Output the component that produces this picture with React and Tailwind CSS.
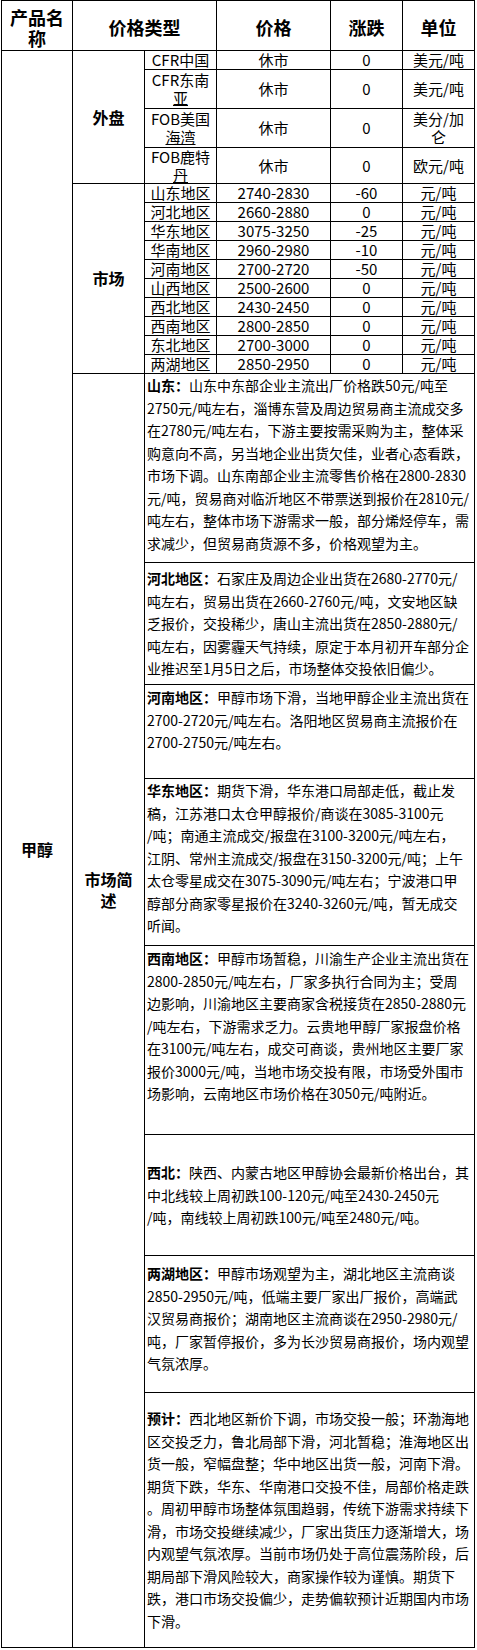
const overseas = [
	{ name: 'CFR中国', price: '休市', change: '0', unit: '美元/吨' },
	{ name: 'CFR东南', tail: '亚', price: '休市', change: '0', unit: '美元/吨' },
	{ name: 'FOB美国', tail: '海湾', price: '休市', change: '0', unit: '美分/加', unitTail: '仑' },
	{ name: 'FOB鹿特', tail: '丹', price: '休市', change: '0', unit: '欧元/吨' },
];

const markets = [
	['山东地区', '2740-2830', '-60'],
	['河北地区', '2660-2880', '0'],
	['华东地区', '3075-3250', '-25'],
	['华南地区', '2960-2980', '-10'],
	['河南地区', '2700-2720', '-50'],
	['山西地区', '2500-2600', '0'],
	['西北地区', '2430-2450', '0'],
	['西南地区', '2800-2850', '0'],
	['东北地区', '2700-3000', '0'],
	['两湖地区', '2850-2950', '0'],
];

// each note: label, padding-top, lines as the reference wraps them
const notes = [
	{
		label: '山东：',
		pad: 'pt-0',
		lines: [
			'山东中东部企业主流出厂价格跌50元/吨至',
			'2750元/吨左右，淄博东营及周边贸易商主流成交多',
			'在2780元/吨左右，下游主要按需采购为主，整体采',
			'购意向不高，另当地企业出货欠佳，业者心态看跌，',
			'市场下调。山东南部企业主流零售价格在2800-2830',
			'元/吨，贸易商对临沂地区不带票送到报价在2810元/',
			'吨左右，整体市场下游需求一般，部分烯烃停车，需',
			'求减少，但贸易商货源不多，价格观望为主。',
		],
	},
	{
		label: '河北地区：',
		pad: 'pt-[4px]',
		lines: [
			'石家庄及周边企业出货在2680-2770元/',
			'吨左右，贸易出货在2660-2760元/吨，文安地区缺',
			'乏报价，交投稀少，唐山主流出货在2850-2880元/',
			'吨左右，因雾霾天气持续，原定于本月初开车部分企',
			'业推迟至1月5日之后，市场整体交投依旧偏少。',
		],
	},
	{
		label: '河南地区：',
		pad: 'pt-px',
		lines: [
			'甲醇市场下滑，当地甲醇企业主流出货在',
			'2700-2720元/吨左右。洛阳地区贸易商主流报价在',
			'2700-2750元/吨左右。',
		],
	},
	{
		label: '华东地区：',
		pad: 'pt-0',
		lines: [
			'期货下滑，华东港口局部走低，截止发',
			'稿，江苏港口太仓甲醇报价/商谈在3085-3100元',
			'/吨；南通主流成交/报盘在3100-3200元/吨左右，',
			'江阴、常州主流成交/报盘在3150-3200元/吨；上午',
			'太仓零星成交在3075-3090元/吨左右；宁波港口甲',
			'醇部分商家零星报价在3240-3260元/吨，暂无成交',
			'听闻。',
		],
	},
	{
		label: '西南地区：',
		pad: 'pt-px',
		lines: [
			'甲醇市场暂稳，川渝生产企业主流出货在',
			'2800-2850元/吨左右，厂家多执行合同为主；受周',
			'边影响，川渝地区主要商家含税接货在2850-2880元',
			'/吨左右，下游需求乏力。云贵地甲醇厂家报盘价格',
			'在3100元/吨左右，成交可商谈，贵州地区主要厂家',
			'报价3000元/吨，当地市场交投有限，市场受外围市',
			'场影响，云南地区市场价格在3050元/吨附近。',
		],
	},
	{
		label: '西北：',
		pad: 'pt-[26px]',
		lines: [
			'陕西、内蒙古地区甲醇协会最新价格出台，其',
			'中北线较上周初跌100-120元/吨至2430-2450元',
			'/吨，南线较上周初跌100元/吨至2480元/吨。',
		],
	},
	{
		label: '两湖地区：',
		pad: 'pt-[6px]',
		lines: [
			'甲醇市场观望为主，湖北地区主流商谈',
			'2850-2950元/吨，低端主要厂家出厂报价，高端武',
			'汉贸易商报价；湖南地区主流商谈在2950-2980元/',
			'吨，厂家暂停报价，多为长沙贸易商报价，场内观望',
			'气氛浓厚。',
		],
	},
	{
		label: '预计：',
		pad: 'pt-[14px]',
		lines: [
			'西北地区新价下调，市场交投一般；环渤海地',
			'区交投乏力，鲁北局部下滑，河北暂稳；淮海地区出',
			'货一般，窄幅盘整；华中地区出货一般，河南下滑。',
			'期货下跌，华东、华南港口交投不佳，局部价格走跌',
			'。周初甲醇市场整体氛围趋弱，传统下游需求持续下',
			'滑，市场交投继续减少，厂家出货压力逐渐增大，场',
			'内观望气氛浓厚。当前市场仍处于高位震荡阶段，后',
			'期局部下滑风险较大，商家操作较为谨慎。期货下',
			'跌，港口市场交投偏少，走势偏软预计近期国内市场',
			'下滑。',
		],
	},
];

const head = 'flex items-center justify-center bg-white pt-[4px] text-center text-[18px] font-bold leading-[21px]';
const data = 'flex items-center justify-center bg-white text-center text-[15px] leading-[18px] whitespace-nowrap';
const label = 'flex items-center justify-center bg-white text-[16px] font-bold leading-[21px]';

export default function App() {
	return (
		<div className="bg-white pb-[2px] font-['Noto_Sans_CJK_SC',sans-serif] text-black">
			<div className="ml-px grid w-fit grid-cols-[70px_71px_71px_113px_71px_71px] grid-rows-[49px_18px_38px_38px_35px_repeat(10,18px)_188px_121px_93px_166px_188px_120px_136px_254px] gap-px bg-black p-px">
				<div className={head}>
					<div>
						<div>产品名</div>
						<div>称</div>
					</div>
				</div>
				<div className={`${head} col-span-2`}>价格类型</div>
				<div className={head}>价格</div>
				<div className={head}>涨跌</div>
				<div className={head}>单位</div>

				<div className={`${label} row-span-22`}>甲醇</div>

				<div className={`${label} row-span-4`}>外盘</div>
				{overseas.map((row) => (
					<OverseasRow key={row.name} row={row} />
				))}

				<div className={`${label} row-span-10`}>市场</div>
				{markets.map(([region, price, change]) => (
					<MarketRow key={region} region={region} price={price} change={change} />
				))}

				<div className="row-span-8 flex justify-center bg-white pt-[495px] text-center text-[16px] font-bold leading-[21px]">
					<div>
						<div>市场简</div>
						<div>述</div>
					</div>
				</div>
				{notes.map((note) => (
					<div
						key={note.label}
						className={`col-span-4 bg-white pl-[2px] text-[14px] leading-[22.5px] ${note.pad}`}
					>
						{note.lines.map((line, i) => (
							<div key={i} className="whitespace-nowrap">
								{i === 0 && <b className="font-bold">{note.label}</b>}
								{line}
							</div>
						))}
					</div>
				))}
			</div>
		</div>
	);
}

function OverseasRow({ row }) {
	return (
		<>
			<div className={`${data} flex-col`}>
				<span>{row.name}</span>
				{row.tail && <span className="underline">{row.tail}</span>}
			</div>
			<div className={data}>{row.price}</div>
			<div className={data}>{row.change}</div>
			<div className={`${data} flex-col`}>
				<span>{row.unit}</span>
				{row.unitTail && <span>{row.unitTail}</span>}
			</div>
		</>
	);
}

function MarketRow({ region, price, change }) {
	return (
		<>
			<div className={data}>{region}</div>
			<div className={data}>{price}</div>
			<div className={data}>{change}</div>
			<div className={data}>元/吨</div>
		</>
	);
}
